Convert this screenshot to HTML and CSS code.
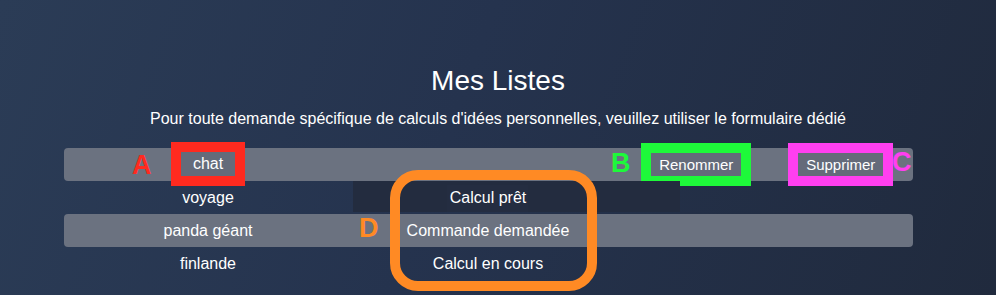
FILE: index.html
```html
<!DOCTYPE html>
<html lang="fr">
<head>
<meta charset="utf-8">
<title>Mes Listes</title>
<link rel="stylesheet" href="styles.css">
</head>
<body>
<main class="page">
  <h1 class="title">Mes Listes</h1>
  <p class="subtitle">Pour toute demande spécifique de calculs d'idées personnelles, veuillez utiliser le formulaire dédié</p>
  <div class="lists">
    <div class="row row--shaded">
      <span class="tag tag--a">A</span>
      <div class="cell"><button class="name-btn mark mark--red">chat</button></div>
      <div class="cell"></div>
      <div class="cell"><button class="action-btn mark mark--green">Renommer</button></div>
      <div class="cell"><button class="action-btn mark mark--magenta">Supprimer</button></div>
      <span class="tag tag--b">B</span>
      <span class="tag tag--c">C</span>
    </div>
    <div class="row">
      <div class="cell">voyage</div>
      <div class="cell cell--status">
        <div class="menu">
          <div class="menu-shade"></div>
          <div class="menu-chip"></div>
          <ul class="options">
            <li class="option">Calcul prêt</li>
            <li class="option">Commande demandée</li>
            <li class="option">Calcul en cours</li>
          </ul>
        </div>
        <div class="ring"></div>
      </div>
      <div class="cell"></div>
      <div class="cell"></div>
    </div>
    <div class="row row--shaded">
      <div class="cell">panda géant</div>
      <div class="cell"></div>
      <div class="cell"></div>
      <div class="cell"></div>
      <span class="tag tag--d">D</span>
    </div>
    <div class="row">
      <div class="cell">finlande</div>
      <div class="cell"></div>
      <div class="cell"></div>
      <div class="cell"></div>
    </div>
  </div>
</main>
</body>
</html>
```

FILE: styles.css
```css
html, body {
  margin: 0;
  height: 100%;
}

body {
  background: linear-gradient(110deg, #2b3c56 0%, #25334e 45%, #202a3d 100%);
  color: #ffffff;
  font-family: "Liberation Sans", Arial, Helvetica, sans-serif;
  overflow: hidden;
}

.page {
  padding-top: 65px;
}

.title {
  margin: 0;
  font-size: 28px;
  line-height: 32px;
  font-weight: 400;
  text-align: center;
}

.subtitle {
  margin: 12px 0 0;
  font-size: 16px;
  line-height: 20px;
  text-align: center;
}

.lists {
  margin: 19px 0 0 64px;
  width: 849px;
}

.row {
  position: relative;
  display: grid;
  grid-template-columns: 288px 272px 1fr 1fr;
  height: 33px;
  align-items: center;
  justify-items: center;
  font-size: 16px;
  border-radius: 4px;
}

.row--shaded {
  background: #6b7280;
}

.cell {
  white-space: nowrap;
}

.cell--status {
  position: relative;
  align-self: stretch;
  justify-self: stretch;
}

.name-btn,
.action-btn {
  border: none;
  border-radius: 0;
  margin: 0;
  color: #ffffff;
  background: #646b7a;
  font-family: inherit;
}

.name-btn {
  font-size: 16px;
  height: 24px;
  line-height: 24px;
  padding: 0 12px;
  margin-top: -2px;
}

.action-btn {
  font-size: 15px;
  height: 23px;
  line-height: 23px;
  padding: 0 8px;
}

.mark {
  outline-style: solid;
  outline-width: 10px;
}

.mark--red { outline-color: #ff2a1f; }
.mark--green { outline-color: #1ef93a; }
.mark--magenta { outline-color: #ff3ff0; }

.tag {
  position: absolute;
  font-size: 27px;
  line-height: 27px;
  font-weight: 700;
  z-index: 3;
}

.tag--a { left: 68px; top: 4px; color: #ff2a1f; }
.tag--b { left: 547px; top: 2px; color: #1ef93a; }
.tag--c { left: 828px; top: 1px; color: #ff3ff0; }
.tag--d { left: 295px; top: 1px; color: #ff8a24; }

.menu {
  position: absolute;
  left: 0;
  top: 0;
  width: 272px;
  z-index: 1;
}

.menu-shade {
  position: absolute;
  left: 1px;
  top: 0;
  width: 327px;
  height: 31px;
  background: #232c3f;
}

.menu-chip {
  position: absolute;
  left: 95px;
  top: 4px;
  width: 81px;
  height: 27px;
  background: #242d41;
}

.options {
  position: relative;
  list-style: none;
  margin: 0;
  padding: 0;
}

.option {
  height: 33px;
  line-height: 33px;
  text-align: center;
  font-size: 16px;
  white-space: nowrap;
}

.ring {
  position: absolute;
  left: 38px;
  top: -11px;
  width: 207px;
  height: 121px;
  box-sizing: border-box;
  border: 10px solid #ff8a24;
  border-radius: 28px;
  z-index: 2;
}
```
